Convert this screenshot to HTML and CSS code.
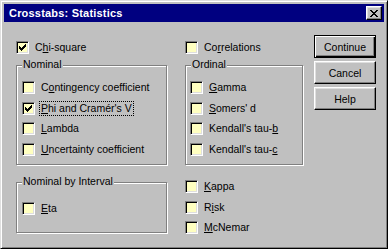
FILE: index.html
```html
<!DOCTYPE html>
<html>
<head>
    <meta charset="UTF-8">
    <meta name="viewport" content="width=device-width, initial-scale=1.0">
    <title>Crosstabs: Statistics</title>
    <link rel="stylesheet" href="styles.css">
</head>
<body>
    <div class="window">
        <div class="caption">
            <span class="caption-title">Crosstabs: Statistics</span>
            <span class="close-btn">
                <svg width="8" height="7" viewBox="0 0 8 7" shape-rendering="crispEdges">
                    <path d="M0 0h2v1h-2z M6 0h2v1h-2z M1 1h2v1h-2z M5 1h2v1h-2z M2 2h4v1h-4z M3 3h2v1h-2z M2 4h4v1h-4z M1 5h2v1h-2z M5 5h2v1h-2z M0 6h2v1h-2z M6 6h2v1h-2z" fill="#000"/>
                </svg>
            </span>
        </div>
        <div class="dialog">
            <div class="options">
                <div class="check">
                    <span class="box"><svg class="tick" width="7" height="7" viewBox="0 0 7 7" shape-rendering="crispEdges"><path d="M0 2h1v1h1v1h1v-1h1v-1h1v-1h1v-1h1v3h-1v1h-1v1h-1v1h-1v1h-1v-1h-1v-1h-1v-1h-1z" fill="#000"/></svg></span>
                    <span>C<u>h</u>i-square</span>
                </div>
                <div class="check">
                    <span class="box"></span>
                    <span>Co<u>r</u>relations</span>
                </div>

                <div class="group nominal">
                    <span class="legend">Nominal</span>
                    <div class="check-list">
                        <div class="check">
                            <span class="box"></span>
                            <span>C<u>o</u>ntingency coefficient</span>
                        </div>
                        <div class="check">
                            <span class="box"><svg class="tick" width="7" height="7" viewBox="0 0 7 7" shape-rendering="crispEdges"><path d="M0 2h1v1h1v1h1v-1h1v-1h1v-1h1v-1h1v3h-1v1h-1v1h-1v1h-1v1h-1v-1h-1v-1h-1v-1h-1z" fill="#000"/></svg></span>
                            <span class="focused"><u>P</u>hi and Cramér's V</span>
                        </div>
                        <div class="check">
                            <span class="box"></span>
                            <span><u>L</u>ambda</span>
                        </div>
                        <div class="check">
                            <span class="box"></span>
                            <span><u>U</u>ncertainty coefficient</span>
                        </div>
                    </div>
                </div>

                <div class="group ordinal">
                    <span class="legend">Ordinal</span>
                    <div class="check-list">
                        <div class="check">
                            <span class="box"></span>
                            <span><u>G</u>amma</span>
                        </div>
                        <div class="check">
                            <span class="box"></span>
                            <span><u>S</u>omers' d</span>
                        </div>
                        <div class="check">
                            <span class="box"></span>
                            <span>Kendall's tau-<u>b</u></span>
                        </div>
                        <div class="check">
                            <span class="box"></span>
                            <span>Kendall's tau-<u>c</u></span>
                        </div>
                    </div>
                </div>

                <div class="group interval">
                    <span class="legend">Nominal by Interval</span>
                    <div class="check">
                        <span class="box"></span>
                        <span><u>E</u>ta</span>
                    </div>
                </div>

                <div class="check-list extra">
                    <div class="check">
                        <span class="box"></span>
                        <span><u>K</u>appa</span>
                    </div>
                    <div class="check">
                        <span class="box"></span>
                        <span>R<u>i</u>sk</span>
                    </div>
                    <div class="check">
                        <span class="box"></span>
                        <span><u>M</u>cNemar</span>
                    </div>
                </div>
            </div>

            <div class="actions">
                <button class="btn default">Continue</button>
                <button class="btn">Cancel</button>
                <button class="btn">Help</button>
            </div>
        </div>
    </div>
</body>
</html>
```

FILE: styles.css
```css
body {
    margin: 0;
    background-color: #FFFFFF;
    font-family: 'Liberation Sans', Arial, sans-serif;
    font-size: 10.5px;
    color: #000000;
}
.window {
    box-sizing: border-box;
    width: 388px;
    height: 249px;
    padding: 3px;
    background-color: #C0C0C0;
    border: 1px solid;
    border-color: #DFDFDF #000000 #000000 #DFDFDF;
    box-shadow: inset 1px 1px 0 #FFFFFF, inset -1px -1px 0 #808080;
}
.caption {
    display: flex;
    align-items: center;
    height: 18px;
    padding-left: 5px;
    background-color: #000080;
    color: #FFFFFF;
}
.caption-title {
    font-size: 11px;
    font-weight: bold;
    letter-spacing: 0.2px;
}
.close-btn {
    box-sizing: border-box;
    display: flex;
    align-items: center;
    justify-content: center;
    width: 16px;
    height: 14px;
    margin-left: auto;
    margin-right: 2px;
    padding-top: 1px;
    background-color: #C0C0C0;
    border: 1px solid;
    border-color: #FFFFFF #000000 #000000 #FFFFFF;
    box-shadow: inset -1px -1px 0 #808080, inset 1px 1px 0 #DFDFDF;
}
.dialog {
    display: flex;
    padding-left: 12px;
}
.options {
    display: grid;
    grid-template-columns: 152px 119px;
    column-gap: 17px;
    align-items: start;
    padding-top: 19px;
}
.check {
    display: flex;
    align-items: center;
    gap: 6px;
    height: 13px;
    line-height: 13px;
    white-space: nowrap;
}
.box {
    box-sizing: border-box;
    flex: none;
    position: relative;
    width: 13px;
    height: 13px;
    background-color: #FFFFC0;
    border: 1px solid;
    border-color: #808080 #FFFFFF #FFFFFF #808080;
    box-shadow: inset 1px 1px 0 #000000, inset -1px -1px 0 #DFDFDF;
}
.tick {
    display: block;
    margin: 2px 0 0 2px;
}
.focused {
    outline: 1px dotted #000000;
    outline-offset: 0;
    padding: 0 1px;
    margin-left: -1px;
}
.check-list {
    display: flex;
    flex-direction: column;
    gap: 7.5px;
}
.group {
    box-sizing: border-box;
    position: relative;
    border: 1px solid #808080;
    box-shadow: inset 1px 1px 0 #FFFFFF, 1px 1px 0 #FFFFFF;
}
.legend {
    position: absolute;
    top: -8px;
    left: 5px;
    padding: 0 1px;
    line-height: 13px;
    background-color: #C0C0C0;
    white-space: nowrap;
}
.nominal,
.ordinal {
    width: 151px;
    height: 100px;
    margin-top: 11px;
    padding: 15px 0 0 5px;
}
.ordinal {
    width: 118px;
    padding-left: 4px;
}
.interval {
    width: 151px;
    height: 51px;
    margin-top: 17px;
    padding: 19px 0 0 5px;
}
.extra {
    margin-top: 15px;
}
.actions {
    display: flex;
    flex-direction: column;
    gap: 3px;
    margin-left: 10px;
    padding-top: 13px;
}
.btn {
    box-sizing: border-box;
    width: 62px;
    height: 23px;
    padding: 0;
    font-family: 'Liberation Sans', Arial, sans-serif;
    font-size: 10.5px;
    color: #000000;
    background-color: #C0C0C0;
    border: 1px solid;
    border-color: #FFFFFF #000000 #000000 #FFFFFF;
    box-shadow: inset -1px -1px 0 #808080, inset 1px 1px 0 #DFDFDF;
}
.btn.default {
    border-color: #000000;
    box-shadow: inset 1px 1px 0 #FFFFFF, inset -1px -1px 0 #000000, inset -2px -2px 0 #808080;
}
```
